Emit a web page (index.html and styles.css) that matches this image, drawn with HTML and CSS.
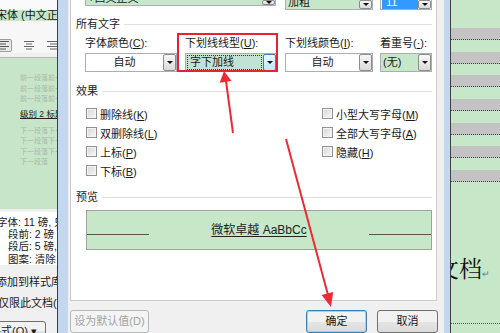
FILE: index.html
```html
<!DOCTYPE html>
<html lang="zh-CN">
<head>
    <meta charset="UTF-8">
    <meta name="viewport" content="width=device-width, initial-scale=1.0">
    <title>字体</title>
    <link rel="stylesheet" href="styles.css">
</head>
<body>
<div class="screen">
    <div class="bg_left">
        <div class="bl_top"></div>
        <div class="bl_font">宋体 (中文正文)</div>
        <div class="bl_gap"></div>
        <div class="bl_tools">
            <span class="tool on">
                <svg width="12" height="11" viewBox="0 0 12 11"><path d="M1 1.5h9M1 4h6M1 6.5h9M1 9h6" stroke="#555" stroke-width="1"/></svg>
            </span>
            <span class="tool">
                <svg width="12" height="11" viewBox="0 0 12 11"><path d="M1 1.5h10M3 4h6M1 6.5h10M3 9h6" stroke="#666" stroke-width="1"/></svg>
            </span>
            <span class="tool">
                <svg width="12" height="11" viewBox="0 0 12 11"><path d="M1 1.5h10M4 4h7M1 6.5h10M4 9h7" stroke="#666" stroke-width="1"/></svg>
            </span>
        </div>
        <div class="bl_preview">
            <p class="ghost">前一段落前一段落</p>
            <p class="ghost">前一段落前一段落</p>
            <p class="ghost">前一段落前一段落</p>
            <p class="level">级别 2 标题</p>
            <p class="ghost gap">下一段落下一段落</p>
            <p class="ghost">下一段落下一段落</p>
            <p class="ghost">下一段落下一段落</p>
            <p class="ghost">下一段落</p>
        </div>
        <div class="bl_desc">
            <p class="first">字体: 11 磅, 只</p>
            <p>段前: 2 磅</p>
            <p>段后: 5 磅,</p>
            <p>图案: 清除</p>
        </div>
        <p class="bl_opt add">添加到样式库</p>
        <p class="bl_opt only">仅限此文档(D)</p>
        <div class="bl_btn">格式(<u>O</u>) ▾</div>
    </div>

    <div class="dialog">
        <div class="dlg_body">
            <div class="panel">
                <div class="top_row">
                    <div class="combo green list1"><span class="val">+西文正文</span><span class="drop"></span></div>
                    <div class="combo green list2"><span class="val">加粗</span><span class="drop"></span></div>
                    <div class="combo list3"><span class="val"><span class="sel">11</span></span><span class="drop"></span></div>
                </div>

                <div class="group_head">所有文字</div>
                <div class="fields">
                    <div class="field f1">
                        <div class="lbl">字体颜色(<u>C</u>):</div>
                        <div class="combo"><span class="val center">自动</span><span class="drop"></span></div>
                    </div>
                    <div class="field f2">
                        <div class="lbl">下划线线型(<u>U</u>):</div>
                        <div class="combo green"><span class="val focus">字下加线</span><span class="drop hot"></span></div>
                    </div>
                    <div class="field f3">
                        <div class="lbl">下划线颜色(<u>I</u>):</div>
                        <div class="combo"><span class="val center">自动</span><span class="drop"></span></div>
                    </div>
                    <div class="field f4">
                        <div class="lbl">着重号(<u>·</u>):</div>
                        <div class="combo green"><span class="val">(无)</span><span class="drop"></span></div>
                    </div>
                </div>

                <div class="group_head">效果</div>
                <div class="effects">
                    <div class="col">
                        <div class="check"><span class="box"></span><span>删除线(<u>K</u>)</span></div>
                        <div class="check"><span class="box"></span><span>双删除线(<u>L</u>)</span></div>
                        <div class="check"><span class="box"></span><span>上标(<u>P</u>)</span></div>
                        <div class="check"><span class="box"></span><span>下标(<u>B</u>)</span></div>
                    </div>
                    <div class="col">
                        <div class="check"><span class="box"></span><span>小型大写字母(<u>M</u>)</span></div>
                        <div class="check"><span class="box"></span><span>全部大写字母(<u>A</u>)</span></div>
                        <div class="check"><span class="box"></span><span>隐藏(<u>H</u>)</span></div>
                    </div>
                </div>

                <div class="group_head">预览</div>
                <div class="preview">
                    <span class="rule"></span>
                    <span class="sample">微软卓越 AaBbCc</span>
                    <span class="rule"></span>
                </div>
            </div>
            <div class="buttons">
                <button class="btn def" disabled>设为默认值(D)</button>
                <button class="btn ok">确定</button>
                <button class="btn">取消</button>
            </div>
        </div>
    </div>

    <div class="bg_right">
        <div class="bands">
            <div class="band"></div>
            <div class="band"></div>
            <div class="band"></div>
            <div class="band"></div>
            <div class="band"></div>
            <div class="band"></div>
            <div class="band"></div>
        </div>
        <div class="doc_title">文档<span class="para">↵</span></div>
        <div class="doc_rule"></div>
    </div>

    <!-- red annotation marks drawn over the screenshot -->
    <svg class="marks" width="500" height="333" viewBox="0 0 500 333">
        <rect x="178" y="34" width="99" height="37" fill="none" stroke="#e8232f" stroke-width="2"/>
        <line x1="233" y1="133" x2="226" y2="81" stroke="#ee2a35" stroke-width="2"/>
        <polygon points="224,71 231.5,81 219.7,82.8" fill="#ee2a35"/>
        <line x1="286" y1="139" x2="328" y2="295" stroke="#ee2a35" stroke-width="2"/>
        <polygon points="331,307 333.2,291.9 321.6,295.1" fill="#ee2a35"/>
    </svg>
</div>
</body>
</html>
```

FILE: styles.css
```css
body{
    margin: 0;
    font-family: "Liberation Sans", "Noto Sans CJK SC", sans-serif;
    font-size: 11px;
    color: #1a1a1a;
}
p{
    margin: 0;
}
u{
    text-underline-offset: 1px;
}
.screen{
    display: flex;
    width: 500px;
    height: 333px;
    overflow: hidden;
    position: relative;
}

/* window behind, on the left */
.bg_left{
    width: 57px;
    flex: none;
    background: #f0f0f0;
    overflow: hidden;
    white-space: nowrap;
}
.bl_top{
    height: 10px;
    background: #fafafa;
}
.bl_font{
    height: 11px;
    line-height: 11px;
    margin-left: -4px;
    background: #c7e6c9;
}
.bl_gap{
    height: 16px;
    background: #f7f7f7;
}
.bl_tools{
    display: flex;
    align-items: center;
    gap: 11px;
    height: 16px;
    margin-left: -2px;
    background: #f7f7f7;
}
.tool{
    display: flex;
    align-items: center;
    justify-content: center;
    width: 14px;
    height: 13px;
    box-sizing: border-box;
}
.tool.on{
    border: 1px solid #9a9a9a;
    border-radius: 2px;
    background: #e9e9e9;
}
.bl_preview{
    height: 152px;
    margin-top: 4px;
    border-top: 1px solid #b8b8b8;
    background: #c7e6c9;
    padding-left: 20px;
    padding-top: 15px;
    box-sizing: border-box;
}
.ghost{
    font-size: 7px;
    line-height: 10.5px;
    color: #abb8ab;
}
.ghost.gap{
    margin-top: 4.5px;
}
.level{
    margin-top: 2.5px;
    font-size: 8.5px;
    line-height: 14px;
    color: #222;
    text-decoration: underline;
}
.bl_desc{
    height: 53px;
    margin-top: 3px;
    padding-top: 4px;
    box-sizing: border-box;
    background: #fff;
    font-size: 10.5px;
    line-height: 12.2px;
    padding-left: 8px;
}
.bl_desc .first{
    margin-left: -11px;
}
.bl_opt{
    line-height: 12px;
}
.bl_opt.add{
    margin-top: 11px;
    margin-left: -4px;
}
.bl_opt.only{
    margin-top: 9px;
    margin-left: -2px;
}
.bl_btn{
    width: 66px;
    height: 20px;
    margin-top: 12px;
    margin-left: -20px;
    padding-left: 9px;
    box-sizing: border-box;
    border: 1px solid #707070;
    border-radius: 3px;
    background: linear-gradient(#f2f2f2 50%, #e3e3e3 50%, #dadada);
    line-height: 18px;
}

/* the font dialog */
.dialog{
    display: flex;
    width: 376px;
    flex: none;
    border-left: 1px solid #404040;
    border-right: 1px solid #404040;
    padding-left: 10px;
    padding-right: 6px;
    background: #c3d8ef;
}
.dlg_body{
    flex: 1;
    display: flex;
    flex-direction: column;
    background: #f0f0f0;
    padding-left: 2px;
    padding-right: 6px;
}
.panel{
    height: 303px;
    margin-right: 1px;
    background: #fff;
    border: 1px solid #cdcdcd;
    border-top: none;
}
.top_row{
    display: flex;
    align-items: flex-start;
    height: 10px;
    padding-left: 14px;
    margin-bottom: 7px;
}
.combo{
    display: flex;
    box-sizing: border-box;
    border: 1px solid #abadb3;
    background: #fff;
}
.combo.green{
    background: #c7e7c9;
}
.val{
    flex: 1;
    padding-left: 2px;
    line-height: 17px;
    white-space: nowrap;
    overflow: hidden;
}
.val.center{
    text-align: center;
    padding-left: 0;
}
.val.focus{
    margin: 1px;
    padding-left: 2px;
    border: 1px dotted #333;
    line-height: 13px;
    background: #c2e2d6;
}
.drop{
    width: 13px;
    flex: none;
    box-sizing: border-box;
    border: 1px solid #8c8c8c;
    border-radius: 2px;
    background: linear-gradient(#f7f7f7, #dadada);
    display: flex;
    align-items: center;
    justify-content: center;
}
.drop::after{
    content: "";
    border-left: 3px solid transparent;
    border-right: 3px solid transparent;
    border-top: 3px solid #111;
}
.drop.hot{
    border-color: #3c7fb1;
    background: linear-gradient(#eaf6fd, #bee6fd);
}
.top_row .combo{
    border-top: none;
    overflow: hidden;
}
.top_row .val{
    display: flex;
    align-items: flex-end;
    line-height: 14px;
}
.list1{
    width: 191px;
    height: 6px;
    margin-right: 9px;
}
.list2{
    width: 88px;
    height: 10px;
    margin-right: 7px;
}
.list3{
    width: 52px;
    height: 10px;
}
.list3 .val{
    padding-left: 1px;
}
.sel{
    display: block;
    width: 100%;
    padding-left: 4px;
    background: #3399ff;
    color: #fff;
}
.group_head{
    display: flex;
    align-items: center;
    gap: 4px;
    height: 14px;
    line-height: 14px;
    padding-left: 5px;
    padding-right: 4px;
    color: #222;
}
.group_head::after{
    content: "";
    flex: 1;
    border-top: 1px solid #dde1e5;
}
.fields{
    display: flex;
    padding-left: 14px;
    margin-top: 6px;
    margin-bottom: 12px;
}
.lbl{
    height: 12px;
    line-height: 12px;
    margin-bottom: 4px;
    white-space: nowrap;
}
.field .combo{
    height: 19px;
}
.f1{ width: 100px; }
.f1 .combo{ width: 92px; }
.f2{ width: 100px; }
.f2 .combo{ width: 92px; }
.f3{ width: 95px; }
.f3 .combo{ width: 88px; }
.f4 .combo{ width: 52px; }
.effects{
    display: flex;
    padding-left: 15px;
    margin-top: 6px;
    margin-bottom: 10px;
}
.effects .col:first-child{
    width: 236px;
}
.check{
    display: flex;
    align-items: center;
    gap: 3px;
    height: 19px;
    white-space: nowrap;
}
.box{
    width: 11px;
    height: 11px;
    box-sizing: border-box;
    border: 1px solid #929292;
    box-shadow: inset 0 0 0 1px #f4f4f4;
    background: linear-gradient(135deg, #d6d6d6, #f8f8f8);
}
.preview{
    display: flex;
    align-items: flex-start;
    justify-content: space-between;
    width: 346px;
    height: 40px;
    box-sizing: border-box;
    margin-top: 6px;
    margin-left: 15px;
    padding-top: 12px;
    border: 1px solid #a0a0a0;
    background: #c7e7c9;
}
.rule{
    width: 62px;
    margin-top: 11px;
    border-top: 1px solid #555;
}
.sample{
    font-size: 12px;
    line-height: 14px;
    color: #222;
    text-decoration: underline;
    text-underline-offset: 2px;
    white-space: pre;
}
.buttons{
    display: flex;
    gap: 10px;
    padding-top: 9px;
}
.btn{
    height: 23px;
    box-sizing: border-box;
    padding: 0;
    font-family: inherit;
    font-size: 11px;
    line-height: 21px;
    color: #1a1a1a;
    border: 1px solid #707070;
    border-radius: 3px;
    background: linear-gradient(#f2f2f2 50%, #e6e6e6 50%, #dadada);
    width: 61px;
}
.btn.def{
    width: 79px;
    color: #a3a3a3;
    border-color: #b5b9bc;
    background: #f4f4f4;
}
.btn.ok{
    margin-left: auto;
    border-color: #3c7fb1;
    box-shadow: inset 0 0 0 1px #9fd3f4;
}

/* document window behind, on the right */
.bg_right{
    flex: 1;
    background: #c7e7c9;
    overflow: hidden;
    white-space: nowrap;
}
.bands{
    display: flex;
    flex-direction: column;
    gap: 11.7px;
    padding-top: 28px;
}
.band{
    height: 11px;
    background: #c3c3c3;
    border-bottom: 1px dotted #444;
}
.doc_title{
    margin-top: 72px;
    margin-left: -15px;
    font-family: "Noto Serif CJK SC", "Noto Sans CJK SC", serif;
    font-size: 23px;
    line-height: 28px;
    color: #111;
}
.para{
    font-size: 9px;
    color: #777;
}
.doc_rule{
    margin-top: 35px;
    border-top: 1px dotted #555;
}
.marks{
    position: absolute;
    left: 0;
    top: 0;
    pointer-events: none;
}
```
